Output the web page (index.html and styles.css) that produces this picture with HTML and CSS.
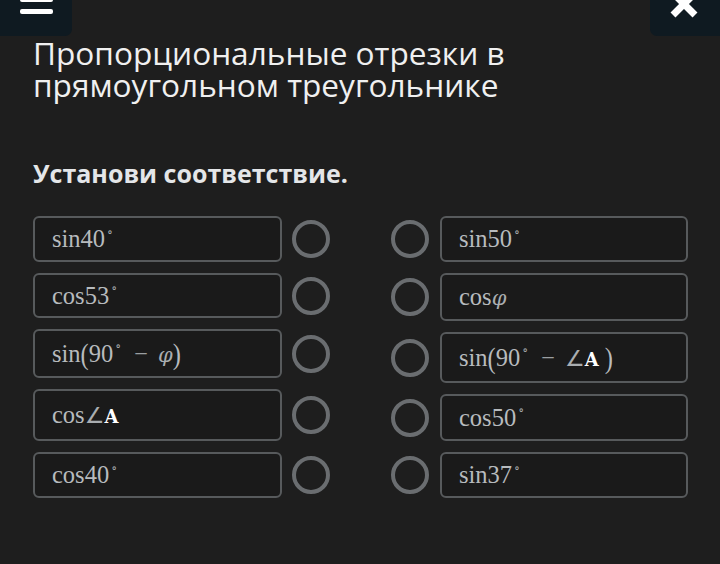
FILE: index.html
```html
<!DOCTYPE html>
<html lang="ru">
<head>
<meta charset="utf-8">
<link rel="stylesheet" href="styles.css">
</head>
<body>
<header class="topbar">
  <button class="tb-btn tb-menu" aria-label="menu">
    <svg width="72" height="36" viewBox="0 0 72 36"><rect x="20" y="-3" width="33" height="5" rx="2" fill="#fff"/><rect x="20" y="9" width="33" height="5" rx="2" fill="#fff"/></svg>
  </button>
  <button class="tb-btn tb-close" aria-label="close">
    <svg width="70" height="36" viewBox="0 0 70 36"><path d="M23 -7 L45 15 M45 -7 L23 15" stroke="#fff" stroke-width="7"/></svg>
  </button>
</header>
<main class="content">
  <h1 class="title">Пропорциональные отрезки в прямоугольном треугольнике</h1>
  <h2 class="task">Установи соответствие.</h2>
  <div class="match">
    <div class="col col-left">
      <div class="row"><div class="box h46"><span class="expr">sin40<sup class="deg">∘</sup></span></div><span class="radio"></span></div>
      <div class="row"><div class="box h45"><span class="expr">cos53<sup class="deg">∘</sup></span></div><span class="radio"></span></div>
      <div class="row"><div class="box h49"><span class="expr">sin<span class="par">(</span>90<sup class="deg">∘</sup><span class="op">−</span><i class="phi">φ</i><span class="par">)</span></span></div><span class="radio"></span></div>
      <div class="row"><div class="box h52"><span class="expr">cos<span class="ang">∠</span><span class="lbl">A</span></span></div><span class="radio"></span></div>
      <div class="row"><div class="box h46"><span class="expr">cos40<sup class="deg">∘</sup></span></div><span class="radio"></span></div>
    </div>
    <div class="col col-right">
      <div class="row"><span class="radio"></span><div class="box h46"><span class="expr">sin50<sup class="deg">∘</sup></span></div></div>
      <div class="row"><span class="radio"></span><div class="box h48"><span class="expr">cos<i class="phi">φ</i></span></div></div>
      <div class="row"><span class="radio"></span><div class="box h51"><span class="expr">sin<span class="par">(</span>90<sup class="deg">∘</sup><span class="op">−</span><span class="ang">∠</span><span class="lbl">A</span>&nbsp;<span class="par">)</span></span></div></div>
      <div class="row"><span class="radio"></span><div class="box h47"><span class="expr">cos50<sup class="deg">∘</sup></span></div></div>
      <div class="row"><span class="radio"></span><div class="box h46"><span class="expr">sin37<sup class="deg">∘</sup></span></div></div>
    </div>
  </div>
</main>
</body>
</html>
```

FILE: styles.css
```css
html, body {
  margin: 0;
  padding: 0;
  background: #1e1e1e;
  width: 720px;
  height: 564px;
  overflow: hidden;
}
body {
  font-family: "Open Sans", "Noto Sans", sans-serif;
  color: #ececec;
}
.topbar {
  display: flex;
  justify-content: space-between;
  height: 36px;
}
.tb-btn {
  border: 0;
  padding: 0;
  margin: 0;
  background: #0f1a21;
  height: 36px;
  display: block;
  overflow: hidden;
}
.tb-btn svg { display: block; overflow: visible; }
.tb-menu { width: 72px; border-bottom-right-radius: 7px; }
.tb-close { width: 70px; border-bottom-left-radius: 7px; }
.content {
  padding: 0 33px;
}
.title {
  margin: 0;
  padding-top: 1px;
  font-weight: 400;
  font-size: 31.6px;
  line-height: 32px;
  color: #f0f0f0;
  letter-spacing: 0;
}
.task {
  margin: 56px 0 0 0;
  font-size: 25px;
  line-height: 32px;
  font-weight: 700;
  color: #e4e6e8;
}
.match {
  display: flex;
  gap: 61px;
  margin-top: 27px;
}
.col {
  display: flex;
  flex-direction: column;
  gap: 11px;
}
.row {
  display: flex;
  align-items: center;
  gap: 10px;
}
.col-right .row { gap: 11px; }
.box {
  box-sizing: border-box;
  width: 249px;
  border: 2px solid #575a5c;
  border-radius: 6px;
  background: #1a1a1a;
  display: flex;
  align-items: center;
  padding-left: 17px;
  font-family: "Liberation Serif", "DejaVu Serif", serif;
  font-size: 24.5px;
  color: #b7bbbe;
}
.expr {
  white-space: nowrap;
  line-height: 1.2;
}
.col-right .box { width: 248px; }
.h45 { height: 45px; }
.h46 { height: 46px; }
.h47 { height: 47px; }
.h48 { height: 48px; }
.h49 { height: 49px; }
.h51 { height: 51px; }
.h52 { height: 52px; }
.deg {
  font-size: 12px;
  vertical-align: 0.95em;
  line-height: 0;
  margin-left: 2px;
  color: #a3a7aa;
}
.par {
  display: inline-block;
  transform: scaleY(1.2);
  font-weight: 300;
}
.op {
  margin: 0 10px 0 13px;
  color: #9a9ea1;
}
.phi {
  font-family: "DejaVu Serif", serif;
  font-size: 21px;
  color: #a9adb0;
}
.ang {
  font-family: "DejaVu Sans", sans-serif;
  font-size: 22px;
  color: #a9adb0;
}
.lbl {
  font-family: "DejaVu Serif", serif;
  font-weight: 700;
  font-size: 18px;
  color: #ffffff;
}
.radio {
  box-sizing: border-box;
  width: 38px;
  height: 38px;
  border: 4px solid #6a6d70;
  border-radius: 50%;
  flex: none;
}
```
